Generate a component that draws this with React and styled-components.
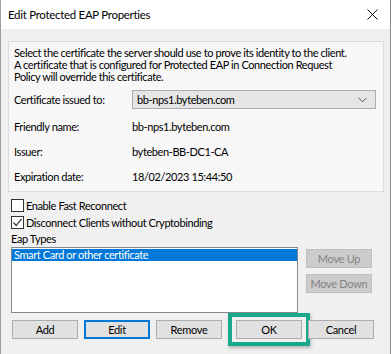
import React from 'react'
import styled, { createGlobalStyle } from 'styled-components'

const GlobalStyle = createGlobalStyle`
  html, body { margin: 0; padding: 0; background: #f0f0f0; }
  body {
    font-family: Lato, "Segoe UI", "Liberation Sans", Arial, sans-serif;
    font-size: 11px;
    letter-spacing: -0.4px;
    color: #000;
  }
`

function Check({ checked }) {
    return (
        <Box>
            {checked && (
                <svg width="11" height="11" viewBox="0 0 11 11">
                    <path d="M1.5 5.5 L4.2 8.5 L9.5 1.8" fill="none" stroke="#333" strokeWidth="1.2" />
                </svg>
            )}
        </Box>
    )
}

function App() {
    return (
        <Window>
            <GlobalStyle />
            <TitleBar>
                <Title>Edit Protected EAP Properties</Title>
                <Close>
                    <svg width="11" height="11" viewBox="0 0 11 11">
                        <path d="M0.5 0.5 L10.5 10.5 M10.5 0.5 L0.5 10.5" stroke="#111" strokeWidth="1" />
                    </svg>
                </Close>
            </TitleBar>
            <Body>
                <Group>
                    <Description>
                        <div>Select the certificate the server should use to prove its identity to the client.</div>
                        <div>A certificate that is configured for Protected EAP in Connection Request</div>
                        <div>Policy will override this certificate.</div>
                    </Description>
                    <ComboRow>
                        <Label>Certificate issued to:</Label>
                        <Combo>
                            <span>bb-nps1.byteben.com</span>
                            <svg width="9" height="6" viewBox="0 0 9 6">
                                <path d="M0.5 0.8 L4.5 4.8 L8.5 0.8" fill="none" stroke="#555" strokeWidth="1" />
                            </svg>
                        </Combo>
                    </ComboRow>
                    <Row>
                        <Label>Friendly name:</Label>
                        <Value>bb-nps1.byteben.com</Value>
                    </Row>
                    <Row>
                        <Label>Issuer:</Label>
                        <Value>byteben-BB-DC1-CA</Value>
                    </Row>
                    <Row>
                        <Label>Expiration date:</Label>
                        <Value>18/02/2023 15:44:50</Value>
                    </Row>
                </Group>

                <Checks>
                    <CheckRow>
                        <Check />
                        <span>Enable Fast Reconnect</span>
                    </CheckRow>
                    <CheckRow>
                        <Check checked />
                        <span>Disconnect Clients without Cryptobinding</span>
                    </CheckRow>
                </Checks>
                <SectionLabel>Eap Types</SectionLabel>

                <ListArea>
                    <List>
                        <Item selected>Smart Card or other certificate</Item>
                    </List>
                    <SideButtons>
                        <Button disabled>Move Up</Button>
                        <Button disabled>Move Down</Button>
                    </SideButtons>
                </ListArea>

                <Footer>
                    <Button>Add</Button>
                    <Button focused>Edit</Button>
                    <Button>Remove</Button>
                    <Button highlight>OK</Button>
                    <Button>Cancel</Button>
                </Footer>
            </Body>
        </Window>
    )
}

export default App

const Window = styled.div`
  width: 391px;
  height: 354px;
  box-sizing: border-box;
  border-left: 1px solid #a0a0a0;
  border-right: 1px solid #8a8a8a;
  background: #f0f0f0;
  overflow: hidden;
`

const TitleBar = styled.div`
  height: 29px;
  background: #fff;
  display: flex;
  align-items: center;
  padding: 0 8px 0 7px;
`

const Title = styled.div`
  flex: 1;
  font-size: 11.5px;
  letter-spacing: -0.3px;
  color: #000;
`

const Close = styled.div`
  width: 11px;
  height: 11px;
  margin-right: 4px;
  display: flex;
`

const Body = styled.div`
  padding: 12px 6px 0 7px;
`

const Group = styled.div`
  border: 1px solid #dcdcdc;
  background: #f7f7f7;
  padding: 5px 7px 2px 5px;
`

const Description = styled.div`
  line-height: 12px;
  white-space: nowrap;
`

const ComboRow = styled.div`
  display: flex;
  align-items: center;
  height: 19px;
  margin-top: 7px;
`

const Row = styled.div`
  display: flex;
  align-items: center;
  height: 25px;
  margin-top: 5px;
  & + & { margin-top: 0; }
`

const Label = styled.div`
  width: 118px;
  flex: none;
`

const Value = styled.div``

const Combo = styled.div`
  flex: 1;
  height: 19px;
  box-sizing: border-box;
  border: 1px solid #adadad;
  background: #e5e5e5;
  display: flex;
  align-items: center;
  justify-content: space-between;
  padding: 0 8px 0 4px;
`

const Checks = styled.div`
  margin-top: 5px;
`

const CheckRow = styled.div`
  display: flex;
  align-items: center;
  gap: 2px;
  height: 17px;
  padding-left: 3px;
`

const Box = styled.div`
  width: 13px;
  height: 13px;
  box-sizing: border-box;
  border: 1px solid #333;
  background: #fff;
  display: flex;
  align-items: center;
  justify-content: center;
`

const SectionLabel = styled.div`
  height: 15px;
  line-height: 15px;
  padding-left: 3px;
`

const ListArea = styled.div`
  display: flex;
  align-items: flex-start;
  gap: 8px;
  margin-top: 1px;
  padding-left: 3px;
`

const List = styled.div`
  width: 287px;
  height: 66px;
  box-sizing: border-box;
  border: 1px solid #828790;
  background: #fff;
  padding: 1px 0;
`

const Item = styled.div`
  height: 12px;
  line-height: 12px;
  padding-left: 2px;
  background: ${p => (p.selected ? '#0078d7' : 'transparent')};
  color: ${p => (p.selected ? '#fff' : '#000')};
`

const SideButtons = styled.div`
  display: flex;
  flex-direction: column;
  gap: 6px;
  margin-top: 2px;
`

const Button = styled.button`
  position: relative;
  width: 66px;
  height: 19px;
  box-sizing: border-box;
  padding: 0;
  white-space: nowrap;
  font-family: inherit;
  font-size: 11px;
  letter-spacing: -0.3px;
  color: ${p => (p.disabled ? '#838383' : '#000')};
  background: ${p => (p.disabled ? '#cccccc' : '#e1e1e1')};
  border: 1px solid ${p => (p.focused ? '#0078d7' : p.disabled ? '#bfbfbf' : '#adadad')};
  ${p => p.focused && 'box-shadow: inset 0 0 0 1px #0078d7;'}
  ${p =>
        p.highlight &&
        `margin-left: 8px;
    &::after {
      content: '';
      position: absolute;
      inset: -8px -9px -8px -9px;
      border: 4px solid #17a98a;
      box-shadow: 1px 2px 3px rgba(0,0,0,0.25);
      pointer-events: none;
    }`}
`

const Footer = styled.div`
  display: flex;
  align-items: center;
  gap: 6px;
  margin-top: 7px;
  padding-left: 4px;
`
